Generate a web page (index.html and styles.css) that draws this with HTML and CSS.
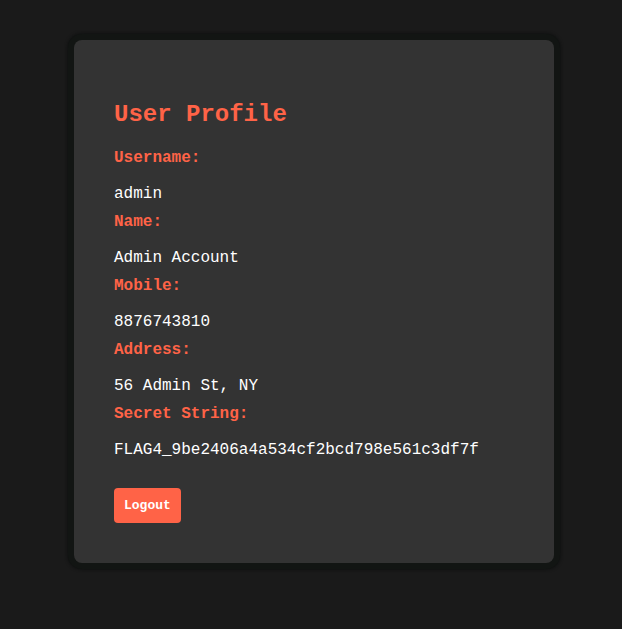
FILE: index.html
```html
<!DOCTYPE html>
<html>
<head>
<meta charset="utf-8">
<link rel="stylesheet" href="styles.css">
</head>
<body>
<div class="page">
  <div class="card">
    <h2 class="title">User Profile</h2>
    <div class="field">
      <div class="label">Username:</div>
      <div class="value">admin</div>
    </div>
    <div class="field">
      <div class="label">Name:</div>
      <div class="value">Admin Account</div>
    </div>
    <div class="field">
      <div class="label">Mobile:</div>
      <div class="value">8876743810</div>
    </div>
    <div class="field">
      <div class="label">Address:</div>
      <div class="value">56 Admin St, NY</div>
    </div>
    <div class="field">
      <div class="label">Secret String:</div>
      <div class="value">FLAG4_9be2406a4a534cf2bcd798e561c3df7f</div>
    </div>
    <button class="logout">Logout</button>
  </div>
</div>
</body>
</html>
```

FILE: styles.css
```css
html, body {
  margin: 0;
  padding: 0;
  background: #1a1a1a;
  font-family: "Liberation Mono", "Courier New", monospace;
}
.page {
  display: flex;
  justify-content: center;
  align-items: flex-start;
  padding-top: 40px;
  padding-left: 6px;
  min-height: 629px;
  box-sizing: border-box;
}
.card {
  width: 480px;
  box-sizing: border-box;
  padding: 40px;
  background: #333333;
  border-radius: 8px;
  box-shadow: 0 0 0 6px #121513, 0 0 3px 7px rgba(10, 12, 11, 0.6);
}
.title {
  margin: 21px 0 21px;
  font-size: 24px;
  font-weight: bold;
  color: #ff6347;
  line-height: 27px;
}
.field {
  display: flex;
  flex-direction: column;
}
.label {
  color: #ff6347;
  font-weight: bold;
  font-size: 16px;
  line-height: 18px;
  margin-bottom: 18px;
}
.value {
  color: #ffffff;
  font-size: 16px;
  line-height: 18px;
  margin-bottom: 10px;
}
.logout {
  margin-top: 19px;
  display: block;
  background: #ff6347;
  color: #ffffff;
  border: none;
  border-radius: 4px;
  font-family: "Liberation Mono", "Courier New", monospace;
  font-weight: bold;
  font-size: 13px;
  line-height: 15px;
  padding: 10px 10px;
}
```
